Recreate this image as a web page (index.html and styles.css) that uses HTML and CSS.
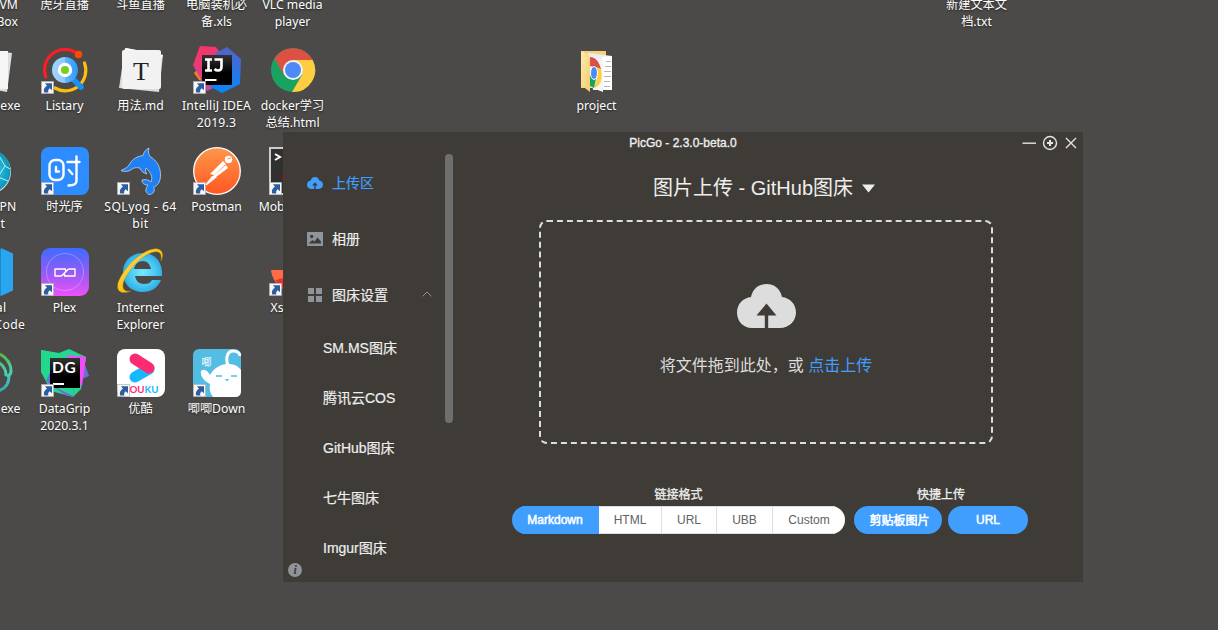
FILE: index.html
```html
<!DOCTYPE html>
<html lang="zh-CN">
<head>
<meta charset="utf-8">
<title>PicGo</title>
<link rel="stylesheet" href="styles.css">
</head>
<body>
<svg class="defs" width="0" height="0">
  <defs>
    <symbol id="shortcut" viewBox="0 0 13 13">
      <path fill="#f7f7f7" stroke="#aaa" stroke-width=".7" d="M.4.4h12.2v12.2H.4z"/>
      <path fill="#2c5da0" d="M4 2.200h7V9.200L8.700 7.200C7.200 8.400 6.800 9.800 7.400 11.600H3.300C2.100 8.600 3.600 6 6 4.700z"/>
    </symbol>
    <linearGradient id="gPost" x2="0" y2="1"><stop stop-color="#ff9649"/><stop offset="1" stop-color="#ff5722"/></linearGradient>
    <linearGradient id="gPlex" x2="0" y2="1"><stop stop-color="#3e6bff"/><stop offset=".55" stop-color="#9a5af7"/><stop offset="1" stop-color="#ee51fa"/></linearGradient>
    <linearGradient id="gIj" x2="0" y2="1"><stop stop-color="#5560c8"/><stop offset="1" stop-color="#0788fd"/></linearGradient>
    <linearGradient id="gPink" x2=".4" y2="1"><stop stop-color="#fe315d"/><stop offset="1" stop-color="#c64aa0"/></linearGradient>
    <linearGradient id="gBlk" x2="0" y2="1"><stop stop-color="#333"/><stop offset=".6" stop-color="#000"/></linearGradient>
    <linearGradient id="gLens" x2="1"><stop stop-color="#a4d5fa"/><stop offset=".5" stop-color="#8dc8f9"/><stop offset=".5" stop-color="#62b6fa"/><stop offset="1" stop-color="#2a98fb"/></linearGradient>
    <linearGradient id="gGold" x2="1" y2="1"><stop stop-color="#ffe579"/><stop offset=".5" stop-color="#fac414"/><stop offset="1" stop-color="#e79b00"/></linearGradient>
    <radialGradient id="gIe"><stop stop-color="#77e7ff"/><stop offset=".65" stop-color="#4bc9f3"/><stop offset="1" stop-color="#32aee5"/></radialGradient>
    <radialGradient id="gGlobe"><stop stop-color="#4bdcf5"/><stop offset="1" stop-color="#0b94ba"/></radialGradient>
    <linearGradient id="gLoop" x2="0" y2="1"><stop stop-color="#58b947"/><stop offset=".5" stop-color="#4bd0b4"/><stop offset="1" stop-color="#31a9b9"/></linearGradient>
    <linearGradient id="gFold" x2="1" y2="1"><stop stop-color="#ffebaa"/><stop offset="1" stop-color="#f3cc6d"/></linearGradient>
  </defs>
</svg>

<main class="desktop">
  <figure class="app r1 c1"><div class="pic"></div><figcaption>Oracle VM<br>VirtualBox</figcaption></figure>
  <figure class="app r1 c2"><div class="pic"></div><figcaption>虎牙直播</figcaption></figure>
  <figure class="app r1 c3"><div class="pic"></div><figcaption>斗鱼直播</figcaption></figure>
  <figure class="app r1 c4"><div class="pic"></div><figcaption>电脑装机必<br>备.xls</figcaption></figure>
  <figure class="app r1 c5"><div class="pic"></div><figcaption>VLC media<br>player</figcaption></figure>
  <figure class="app r1 c14"><div class="pic"></div><figcaption>新建文本文<br>档.txt</figcaption></figure>

  <figure class="app r2 c1">
    <svg class="pic" viewBox="0 0 48 48"><path fill="#ddd" d="M8 2l39 5-5 39-37-6z"/><path fill="#f5f5f5" d="M4 5h39v38H4z"/></svg>
    <figcaption class="wide">Typora.exe</figcaption>
  </figure>
  <figure class="app r2 c2">
    <svg class="pic" viewBox="0 0 48 48">
      <g fill="none" stroke-width="3.200" stroke-linecap="round">
        <path stroke="#fb1e27" d="M4.800 31A20.500 20.500 0 0 1 34 6"/>
        <path stroke="#fdbe0d" d="M43.500 17A20.500 20.500 0 0 1 14 42"/>
      </g>
      <path d="M33 34l7 7" stroke="#1591fb" stroke-width="5.500" stroke-linecap="round"/>
      <circle cx="24" cy="24" r="13" fill="url(#gLens)"/>
      <circle cx="24" cy="24" r="7.200" fill="#fff"/><circle cx="24" cy="24" r="4" fill="#76ce20"/>
      <circle cx="37.500" cy="8.500" r="3.700" fill="#fd4a08"/>
      <use href="#shortcut" x="0" y="35" width="13" height="13"/>
    </svg>
    <figcaption>Listary</figcaption>
  </figure>
  <figure class="app r2 c3">
    <svg class="pic" viewBox="0 0 48 48">
      <path fill="#dcdcdc" d="M8 2l38 7-4 37L2 42z"/><path fill="#fff" d="M9 2l37 7-3 6L5 8z"/>
      <rect x="5" y="4" width="39" height="39" rx="2" fill="#f2f2f2"/>
      <text x="24" y="33.500" text-anchor="middle" class="serif-t">T</text>
    </svg>
    <figcaption>用法.md</figcaption>
  </figure>
  <figure class="app r2 c4">
    <svg class="pic" viewBox="0 0 48 48">
      <path fill="#f58220" d="M1 27l8-9 6 19-9-3z"/>
      <path fill="url(#gPink)" d="M7 0l16 1 10 15v20L14 45 0 19z"/>
      <path fill="url(#gIj)" d="M21 8L34 1l14 12-1 25-18 9-13-7 12-3V10z"/>
      <rect x="9" y="9" width="30" height="30" fill="url(#gBlk)"/>
      <g fill="none" stroke="#fff" stroke-width="2.600"><path d="M12 13.500h7M12 24.500h7M15.500 13v12M21.500 13.500h7V21q0 3.500-3.500 3.500-2 0-3.500-1.500"/></g>
      <path fill="#fff" d="M12 33h11.500v2H12z"/>
      <use href="#shortcut" x="0" y="35" width="13" height="13"/>
    </svg>
    <figcaption class="wide">IntelliJ IDEA<br>2019.3</figcaption>
  </figure>
  <figure class="app r2 c5">
    <svg class="pic" viewBox="0 0 48 48">
      <circle cx="24" cy="24" r="22" fill="#1aa260"/>
      <path fill="#ffcd40" d="M24 14h19.700A22 22 0 0 1 23 46l10-17z"/>
      <path fill="#dd5044" d="M5.500 12.500A22 22 0 0 1 43.700 14H24l-9 15z"/>
      <circle cx="24" cy="24" r="10" fill="#f2f2f2"/><circle cx="24" cy="24" r="8" fill="#4c8bf5"/>
    </svg>
    <figcaption>docker学习<br>总结.html</figcaption>
  </figure>
  <figure class="app r2 c9">
    <svg class="pic" viewBox="0 0 48 48">
      <path fill="#f6d27d" d="M8 5h25v37H8z"/>
      <path fill="#eee" d="M15 7l24 3v34H20z"/><path fill="#fff" d="M29 11l10-1v34l-10-1z"/>
      <path d="M33 15.500h5m-6 5h6m-7 5h7m-7 5h7m-7 5h6m-6 5h6" stroke="#b5b5b5"/>
      <path fill="#f4f5f7" d="M17 10l13 4v32l-13-5z"/>
      <path fill="#dd5044" d="M17 11c6 0 9 5 11 12l-11-3z"/>
      <path fill="#ffcd40" d="M23 21l5 2c2 9 0 17-7 19l3-9z"/>
      <path fill="#1aa260" d="M17 29l6 4-2 9-4-2z"/>
      <ellipse cx="21" cy="27" rx="3.500" ry="6.500" fill="#4c8bf5" stroke="#fff"/>
      <path fill="url(#gFold)" d="M8 5l9 5v36l-9-7z"/>
    </svg>
    <figcaption>project</figcaption>
  </figure>

  <figure class="app r3 c1">
    <svg class="pic" viewBox="0 0 48 48"><circle cx="24" cy="25" r="22" fill="#ddd"/><circle cx="23.500" cy="24" r="22" fill="url(#gGlobe)"/><path d="M33 7l7 12 5 3M40 19l-7 11 10 4M33 30l-5 14" fill="none" stroke="#b4f3fb"/></svg>
    <figcaption>OpenVPN<br>Client</figcaption>
  </figure>
  <figure class="app r3 c2">
    <svg class="pic" viewBox="0 0 48 48">
      <rect width="48" height="48" rx="8" fill="#2d8cff"/>
      <g fill="none" stroke="#fff" stroke-width="2.400" stroke-linecap="round" stroke-linejoin="round">
        <rect x="8.500" y="13" width="14" height="20" rx="5.500"/><path d="M15 20v4.500h3"/>
        <path d="M26.500 15h12M35.500 9.500V34q0 4.500-8 4.500"/><path d="M27.800 23l3.500 4"/>
      </g>
      <use href="#shortcut" x="0" y="35" width="13" height="13"/>
    </svg>
    <figcaption>时光序</figcaption>
  </figure>
  <figure class="app r3 c3">
    <svg class="pic" viewBox="0 0 48 48">
      <path fill="#2080f6" stroke="#bcd5ee" stroke-width=".8" d="M4 23.500c4-2 7-3 9-7 3-5 7-7 13-8 1-4 3-6 6-7.500-1 4-.5 6 1 8.500 7 4 11 11 10.500 20-.5 6-3 9-7 11 2 3 0 7-5 7-4-3-3-6-.5-9.500-3 0-6-1-6-5 4-1 7 0 9 2 2-5 0-9-5-14-1 2-.5 4 1 6-4-1-6-3-7-6-5-1-7 0-10 2.500-4 1.500-7 1-9 0z"/>
      <use href="#shortcut" x="0" y="35" width="13" height="13"/>
    </svg>
    <figcaption class="wider">SQLyog - 64<br>bit</figcaption>
  </figure>
  <figure class="app r3 c4">
    <svg class="pic" viewBox="0 0 48 48">
      <circle cx="24" cy="24" r="23.300" fill="url(#gPost)" stroke="#fff" stroke-width="1.300"/>
      <circle cx="35.500" cy="12.500" r="3.700" fill="#fff"/><path d="M34.500 12l3.500-1" fill="none" stroke="#ff8843"/>
      <path fill="#fff" d="M30 14l3 3-12 11-4-1zM33 18l2 3-12 9-3-1zM12 38l7-9 5 1-10 8z"/>
      <use href="#shortcut" x="0" y="35" width="13" height="13"/>
    </svg>
    <figcaption>Postman</figcaption>
  </figure>
  <figure class="app r3 c5">
    <svg class="pic" viewBox="0 0 48 48"><path fill="#303030" stroke="#ccc" stroke-width="2" d="M1 1h46v46H1z"/><path d="M6 7l5 3-5 3" fill="none" stroke="#fff" stroke-width="2"/><path fill="#a00" d="M13 27h8v6h-8z"/><use href="#shortcut" x="0" y="35" width="13" height="13"/></svg>
    <figcaption>MobaXterm</figcaption>
  </figure>

  <figure class="app r4 c1">
    <svg class="pic" viewBox="0 0 48 48"><path fill="#29a6ef" d="M36 0l13 6v36l-13 6z"/><path fill="#168bd0" d="M20 1h16v47H20z"/></svg>
    <figcaption class="wider">Visual<br>Studio Code</figcaption>
  </figure>
  <figure class="app r4 c2">
    <svg class="pic" viewBox="0 0 48 48">
      <rect width="48" height="48" rx="9" fill="url(#gPlex)"/>
      <circle cx="24" cy="24" r="18.500" fill="none" stroke="#fff" stroke-opacity=".28"/>
      <path d="M20.500 28H14v-7h10.500v3.500M27.500 21H34v7H23.500v-3.500M20.500 28l7-7" fill="none" stroke="#fff" stroke-width="1.400" stroke-linejoin="round"/>
      <use href="#shortcut" x="0" y="35" width="13" height="13"/>
    </svg>
    <figcaption>Plex</figcaption>
  </figure>
  <figure class="app r4 c3">
    <svg class="pic" viewBox="0 0 48 48">
      <path fill="url(#gIe)" fill-rule="evenodd" d="M44 32c-3 8-10 12-18 12C14 44 6 36 6 25 6 13 14 5 26 5c12 0 20 9 19 23H18c1 5 4 8 9 8 4 0 6-1 8-4zM17 21h17c-1-5-4-8-8-8-5 0-8 3-9 8z"/>
      <path d="M44 13C48 5 44 0 37 1 22 3 5 23 1 35c-2 8 3 12 13 8-5 1-9-1-8-7C9 24 25 6 37 4c6-1 8 2 7 9z" fill="url(#gGold)" stroke="#c98b00" stroke-width=".3"/>
    </svg>
    <figcaption>Internet<br>Explorer</figcaption>
  </figure>
  <figure class="app r4 c5">
    <svg class="pic" viewBox="0 0 48 48"><path fill="#ff6b45" d="M2 22h14v20C8 38 3 31 2 22z"/><path fill="#f03030" d="M6 33q4-3 10-3v12z"/><use href="#shortcut" x="0" y="35" width="13" height="13"/></svg>
    <figcaption>Xshell 6</figcaption>
  </figure>

  <figure class="app r5 c1">
    <svg class="pic" viewBox="0 0 48 48"><path d="M35 5c7 4 11 10 11 17 0 4-3 6-6 3M44 27c0 8-4 13-11 15M33 13c5 3 8 7 8 13" fill="none" stroke="url(#gLoop)" stroke-width="3"/></svg>
    <figcaption>navicat.exe</figcaption>
  </figure>
  <figure class="app r5 c2">
    <svg class="pic" viewBox="0 0 48 48">
      <path fill="#22d88f" d="M0 1l18 3 10-4 17 8-5 32-8 8L10 42 0 23z"/>
      <path fill="#6d6ddd" d="M5 32l10-22 26-3 7 20-14 6-2 15-8-2z"/>
      <path fill="#f54cfb" d="M26 6l19 2-4 29-8-4z"/><path fill="#22d88f" d="M0 1l16 3-4 17-12 3zM14 38l19-1-1 10z"/>
      <rect x="9" y="9" width="30" height="30" fill="url(#gBlk)"/>
      <text x="11" y="24" class="dg">DG</text><path fill="#fff" d="M12 34h11v2H12z"/>
      <use href="#shortcut" x="0" y="35" width="13" height="13"/>
    </svg>
    <figcaption>DataGrip<br>2020.3.1</figcaption>
  </figure>
  <figure class="app r5 c3">
    <svg class="pic" viewBox="0 0 48 48">
      <rect width="48" height="48" rx="8" fill="#fff"/>
      <path d="M18 28l14-8" stroke="#14b9ff" stroke-width="11" stroke-linecap="round"/>
      <path d="M18 10l14 9" stroke="#ff2b72" stroke-width="11" stroke-linecap="round"/>
      <text x="12.500" y="44" class="youku" textLength="29" lengthAdjust="spacingAndGlyphs"><tspan fill="#ff2b72">OU</tspan><tspan fill="#14b9ff">KU</tspan></text>
      <use href="#shortcut" x="0" y="35" width="13" height="13"/>
    </svg>
    <figcaption>优酷</figcaption>
  </figure>
  <figure class="app r5 c4">
    <svg class="pic" viewBox="0 0 48 48">
      <rect width="48" height="48" rx="6" fill="#53bde3"/>
      <path d="M35 17c-3-9 0-15 5-15 4 0 7 2 7 5" fill="none" stroke="#fff" stroke-width="3"/>
      <path fill="#fff" d="M20 48c-3-4-4-8-3-13-6-3-10-8-9-13 3-3 7 0 9 4 4-7 10-11 18-11 6 0 10 2 13 6v21q0 6-6 6z"/>
      <path d="M23 27h6M38 27h6" stroke="#53bde3" stroke-width="1.500"/><path fill="#53bde3" d="M32 30h4l-2 2.500z"/>
      <text x="8.500" y="17" class="jj">唧</text>
      <use href="#shortcut" x="0" y="35" width="13" height="13"/>
    </svg>
    <figcaption>唧唧Down</figcaption>
  </figure>
</main>

<section class="window">
  <header class="titlebar">
    <span class="title">PicGo - 2.3.0-beta.0</span>
    <svg class="controls" viewBox="0 0 56 16" fill="none" stroke="#e4e4e4" stroke-width="1.400">
      <path d="M.5 8.200H14"/><circle cx="28" cy="8" r="6.500"/><path d="M28 5v6M25 8h6" stroke-width="2"/><path d="M44 3l10 10M54 3L44 13"/>
    </svg>
  </header>
  <div class="body">
    <aside class="sidebar">
      <nav class="menu">
        <a class="item active"><svg class="ico" viewBox="0 0 59 44"><path fill="currentColor" fill-rule="evenodd" d="M14 13C16 4 22 0 29.500 0S43 4 45 13c8 1 14 7 14 15.500S52 44 43 44H32V31h8L29.500 19 19 31h8v13H15C6 44 0 37 0 28.500S6 14 14 13z"/></svg><span>上传区</span></a>
        <a class="item"><svg class="ico" viewBox="0 0 16 14"><path fill="#909399" fill-rule="evenodd" d="M0 0h16v14H0zM2 11.500h12v-2l-3.500-4-3 4-2-1.500L2 11zM3 4.500a1.700 1.700 0 1 0 3.400 0 1.700 1.700 0 1 0-3.400 0"/></svg><span>相册</span></a>
        <a class="item"><svg class="ico" viewBox="0 0 16 14"><path fill="#909399" d="M1 0h6v6H1zM9 0h6v6H9zM1 8h6v6H1zM9 8h6v6H9z"/></svg><span>图床设置</span>
          <svg class="chev" viewBox="0 0 10 6"><path d="M.7 5.300L5 1l4.300 4.300" fill="none" stroke="#909399"/></svg></a>
        <a class="sub">SM.MS图床</a>
        <a class="sub">腾讯云COS</a>
        <a class="sub">GitHub图床</a>
        <a class="sub">七牛图床</a>
        <a class="sub">Imgur图床</a>
      </nav>
      <div class="thumb"></div>
      <svg class="info" viewBox="0 0 14 14"><circle cx="7" cy="7" r="7" fill="#909399"/><text x="7.200" y="10.800" text-anchor="middle">i</text></svg>
    </aside>
    <div class="upload">
      <h1 class="heading">图片上传 - GitHub图床<svg class="caret" viewBox="0 0 13 9"><path fill="#eee" d="M0 .5h13L6.500 8.500z"/></svg></h1>
      <div class="drop">
        <svg class="cloud" viewBox="0 0 59 44"><path fill="#ddd" fill-rule="evenodd" d="M14 13C16 4 22 0 29.500 0S43 4 45 13c8 1 14 7 14 15.500S52 44 43 44H31.200V31.500H39.500L29.500 19.500 19.500 31.500h8.300V44H15C6 44 0 37 0 28.500S6 14 14 13z"/></svg>
        <p class="hint">将文件拖到此处，或 <a class="link">点击上传</a></p>
      </div>
      <div class="options">
        <div class="group">
          <span class="label">链接格式</span>
          <div class="segmented">
            <button class="seg on w1">Markdown</button><button class="seg w2">HTML</button><button class="seg w3">URL</button><button class="seg w4">UBB</button><button class="seg w5">Custom</button>
          </div>
        </div>
        <div class="group">
          <span class="label">快捷上传</span>
          <div class="quick"><button class="pill clip">剪贴板图片</button><button class="pill url">URL</button></div>
        </div>
      </div>
    </div>
  </div>
</section>
</body>
</html>
```
FILE: styles.css
```css
* { box-sizing: border-box; }
body { margin: 0; width: 1218px; height: 630px; overflow: hidden; position: relative; background: #4b4a48; }
.defs { position: absolute; }

.desktop {
  display: grid;
  grid-template-columns: repeat(17, 76px);
  grid-template-rows: repeat(6, 101px);
  margin: -55px 0 0 -49px;
  width: 1292px;
}
.app { margin: 0; display: flex; flex-direction: column; align-items: center; gap: 3px; }
.pic { width: 48px; height: 48px; flex: none; }
.app figcaption {
  font: 12.200px/17px "Noto Sans", "Noto Sans CJK SC", sans-serif;
  color: #fff; text-align: center; white-space: nowrap;
  text-shadow: 0 1px 2px rgba(0,0,0,.6);
  margin-left: -1px;
}
.app figcaption.wide { letter-spacing: .2px; }
.app figcaption.wider { letter-spacing: .4px; }
.r1 { grid-row: 1; } .r2 { grid-row: 2; } .r3 { grid-row: 3; } .r4 { grid-row: 4; } .r5 { grid-row: 5; }
.c1 { grid-column: 1; } .c2 { grid-column: 2; } .c3 { grid-column: 3; } .c4 { grid-column: 4; }
.c5 { grid-column: 5; } .c9 { grid-column: 9; } .c14 { grid-column: 14; }

.serif-t { font: 26px "Liberation Serif", serif; fill: #222; }
.dg { font: bold 15.500px Lato, sans-serif; fill: #fff; letter-spacing: .8px; }
.youku { font: bold 10px Lato, sans-serif; }
.jj { font: 10px "Noto Sans CJK SC", sans-serif; fill: #fff; }

.window {
  position: absolute; left: 283px; top: 132px; width: 800px; height: 450px;
  background: #3f3c37; color: #eee; overflow: hidden;
  display: flex; flex-direction: column;
  font-family: "Liberation Sans", "Noto Sans CJK SC", sans-serif;
}
.titlebar { height: 22px; flex: none; display: flex; align-items: center; justify-content: flex-end; padding-right: 5px; }
.title { flex: 1; padding-left: 5px; text-align: center; font-size: 12px; line-height: 20px; margin-right: -56px; -webkit-text-stroke: .35px #eee; }
.controls { width: 56px; height: 16px; }
.body { display: flex; flex: 1; min-height: 0; }

.sidebar { width: 170px; position: relative; display: flex; justify-content: space-between; flex: none; }
.menu { flex: 1; padding: 1px 0 0; font-size: 14px; -webkit-text-stroke: .2px currentColor; }
.item { height: 56px; display: flex; align-items: center; padding-left: 24px; }
.item span { padding-bottom: 2px; }
.item.active { color: #409eff; }
.ico { width: 16px; height: 14px; margin-right: 9px; }
.chev { width: 10px; height: 6px; margin-left: auto; margin-right: 13px; margin-bottom: 3px; }
.sub { height: 50px; display: flex; align-items: center; padding: 0 0 2px 40px; }
.thumb { width: 8px; height: 269px; border-radius: 4px; background: #6f6f6f; }
.info { position: absolute; left: 5px; bottom: 5px; width: 14px; height: 14px; }
.info text { font: italic bold 12px "Liberation Serif", serif; fill: #3f3c37; }

.upload { flex: 1; padding-right: 4px; display: flex; flex-direction: column; align-items: center; }
.heading { margin: 19px 4px 17px 0; height: 30px; display: flex; align-items: center; font-size: 20px; font-weight: 400; line-height: 30px; white-space: nowrap; }
.caret { width: 13px; height: 9px; margin-left: 9px; }
.drop { width: 454px; height: 224px; border: 2px dashed #ddd; border-radius: 8px; display: flex; flex-direction: column; align-items: center; padding-top: 62px; }
.cloud { width: 59px; height: 44px; }
.hint { margin: 26px 0 0; font-size: 16px; line-height: 24px; color: #ddd; white-space: nowrap; }
.link { color: #409eff; }
.options { display: flex; gap: 9px; margin-top: 41px; padding-left: 8px; }
.group { display: flex; flex-direction: column; align-items: center; }
.label { font-size: 12px; line-height: 20px; height: 21px; -webkit-text-stroke: .3px #eee; }
.segmented { display: flex; border-radius: 14px; overflow: hidden; width: 333px; }
.seg, .pill { border: 0; padding: 0; height: 28px; font: 12px "Liberation Sans", "Noto Sans CJK SC", sans-serif; }
.seg { background: #fff; color: #606266; border: 1px solid #dcdfe6; border-left: 0; }
.seg.on { background: #409eff; color: #fff; border-color: #409eff; -webkit-text-stroke: .5px #fff; }
.w1 { width: 87px; } .w2 { width: 63px; } .w3 { width: 55px; } .w4 { width: 56px; } .w5 { width: 72px; border-right: 0; }
.quick { display: flex; gap: 6px; }
.pill { background: #409eff; color: #fff; border-radius: 14px; -webkit-text-stroke: .5px #fff; }
.clip { width: 88px; padding: 0 0 2px 3px; } .url { width: 80px; }
```
